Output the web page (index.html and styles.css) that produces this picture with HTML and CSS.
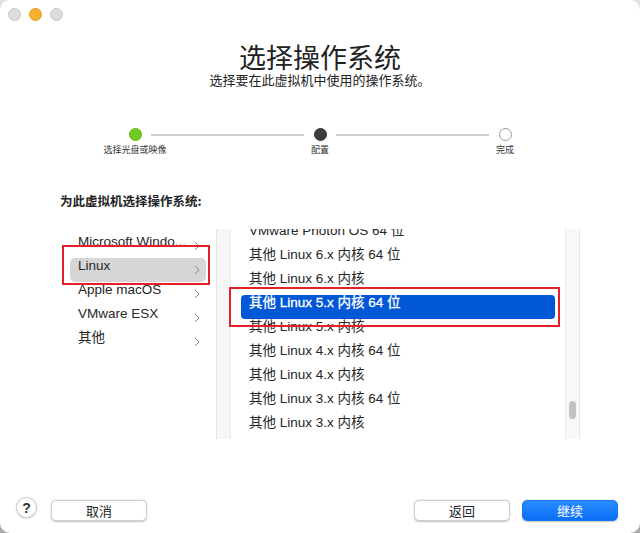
FILE: index.html
```html
<!DOCTYPE html>
<html lang="zh-CN">
<head>
    <meta charset="UTF-8">
    <meta name="viewport" content="width=device-width, initial-scale=1.0">
    <title>选择操作系统</title>
    <link rel="stylesheet" href="styles.css">
</head>
<body>
    <div class="window">
        <div class="titlebar">
            <span class="light"></span>
            <span class="light light-min"></span>
            <span class="light"></span>
        </div>

        <div class="header">
            <h1>选择操作系统</h1>
            <p>选择要在此虚拟机中使用的操作系统。</p>
        </div>

        <div class="steps">
            <div class="step">
                <span class="dot dot-done"></span>
                <span class="step-label">选择光盘或映像</span>
            </div>
            <span class="step-line"></span>
            <div class="step">
                <span class="dot dot-current"></span>
                <span class="step-label">配置</span>
            </div>
            <span class="step-line"></span>
            <div class="step">
                <span class="dot"></span>
                <span class="step-label">完成</span>
            </div>
        </div>

        <h2 class="section-title">为此虚拟机选择操作系统:</h2>

        <div class="browser">
            <ul class="column column-family">
                <li class="row">Microsoft Windo...<svg class="chevron" viewBox="0 0 6 10"><polyline points="1,1 5,5 1,9"/></svg></li>
                <li class="row row-active">Linux<svg class="chevron" viewBox="0 0 6 10"><polyline points="1,1 5,5 1,9"/></svg></li>
                <li class="row">Apple macOS<svg class="chevron" viewBox="0 0 6 10"><polyline points="1,1 5,5 1,9"/></svg></li>
                <li class="row">VMware ESX<svg class="chevron" viewBox="0 0 6 10"><polyline points="1,1 5,5 1,9"/></svg></li>
                <li class="row">其他<svg class="chevron" viewBox="0 0 6 10"><polyline points="1,1 5,5 1,9"/></svg></li>
            </ul>
            <div class="gutter"></div>
            <div class="column column-versions">
                <ul class="version-list">
                    <li class="row">VMware Photon OS 64 位</li>
                    <li class="row">其他 Linux 6.x 内核 64 位</li>
                    <li class="row">其他 Linux 6.x 内核</li>
                    <li class="row row-selected">其他 Linux 5.x 内核 64 位</li>
                    <li class="row">其他 Linux 5.x 内核</li>
                    <li class="row">其他 Linux 4.x 内核 64 位</li>
                    <li class="row">其他 Linux 4.x 内核</li>
                    <li class="row">其他 Linux 3.x 内核 64 位</li>
                    <li class="row">其他 Linux 3.x 内核</li>
                </ul>
            </div>
            <div class="scrollbar">
                <span class="thumb"></span>
            </div>
        </div>

        <div class="footer">
            <button class="help">?</button>
            <button class="btn btn-cancel">取消</button>
            <span class="spacer"></span>
            <button class="btn">返回</button>
            <button class="btn btn-primary">继续</button>
        </div>

        <!-- 标注框 -->
        <div class="mark mark-family"></div>
        <div class="mark mark-version"></div>
    </div>
</body>
</html>
```

FILE: styles.css
```css
body {
    margin: 0;
    padding: 0;
    background: linear-gradient(#e2e2e2, #a9a9a9);
    font-family: "Liberation Sans", "Noto Sans CJK SC", sans-serif;
    color: #262626;
}

.window {
    position: relative;
    width: 640px;
    height: 533px;
    background: white;
    border-radius: 10px;
    overflow: hidden;
    display: flex;
    flex-direction: column;
}

.titlebar {
    height: 28px;
    display: flex;
    align-items: center;
    gap: 8px;
    padding-left: 8px;
}

.light {
    width: 11px;
    height: 11px;
    border-radius: 50%;
    background: #dcdcdc;
    border: 0.5px solid #c6c6c6;
}

.light-min {
    background: #f7b12c;
    border-color: #e09d1e;
}

.header {
    text-align: center;
    margin-top: 13px;
}

h1 {
    margin: 0;
    font-family: "Noto Sans CJK SC", sans-serif;
    font-size: 27px;
    font-weight: normal;
    line-height: 31px;
    color: #222;
}

.header p {
    margin: 0;
    font-family: "Noto Sans CJK SC", sans-serif;
    font-size: 13px;
    line-height: 16px;
    color: #222;
}

.steps {
    display: flex;
    justify-content: center;
    margin-top: 40px;
}

.step {
    width: 13px;
    display: flex;
    flex-direction: column;
    align-items: center;
}

.dot {
    width: 13px;
    height: 13px;
    box-sizing: border-box;
    border-radius: 50%;
    border: 1px solid #9a9a9a;
    background: white;
}

.dot-done {
    background: #6fcc1f;
    border-color: #5fb418;
}

.dot-current {
    background: #3c3c3c;
    border-color: #333;
}

.step-label {
    white-space: nowrap;
    font-family: "Noto Sans CJK SC", sans-serif;
    font-size: 9px;
    line-height: 12px;
    margin-top: 3px;
    color: #333;
}

.step-line {
    width: 153px;
    height: 2px;
    margin: 5.5px 9.5px 0;
    background: #cfcfcf;
}

.section-title {
    margin: 37px 0 0 60px;
    font-family: "Noto Sans CJK SC", sans-serif;
    font-size: 12.5px;
    font-weight: bold;
    line-height: 16px;
    color: #222;
}

.browser {
    display: flex;
    height: 210px;
    margin: 20px 60px 0;
}

ul {
    list-style: none;
    margin: 0;
    padding: 0;
}

.column {
    font-size: 13.5px;
}

.row {
    height: 24px;
    box-sizing: border-box;
    line-height: 16px;
    padding-left: 8px;
    display: flex;
    align-items: flex-start;
    white-space: nowrap;
}

.column-family {
    width: 156px;
    padding: 5px 10px 0;
    box-sizing: border-box;
}

.column-family .row {
    padding-right: 6px;
    border-radius: 5px;
}

.row-active {
    background: #d6d6d6;
}

.chevron {
    width: 6px;
    height: 10px;
    margin-left: auto;
    margin-top: 7px;
    fill: none;
    stroke: #8a8a8a;
    stroke-width: 1;
}

.gutter {
    width: 15px;
    box-sizing: border-box;
    background: #f6f6f6;
    border-left: 1px solid #e6e6e6;
    border-right: 1px solid #ececec;
}

.column-versions {
    width: 334px;
    overflow: hidden;
    padding: 0 10px;
    box-sizing: border-box;
}

.version-list {
    margin-top: -6px;
}

.row-selected {
    background: #0058d6;
    color: white;
    border-radius: 4px;
    -webkit-text-stroke: 0.3px white;
}

.scrollbar {
    width: 15px;
    box-sizing: border-box;
    background: #f8f8f8;
    border-left: 1px solid #e8e8e8;
    border-right: 1px solid #e8e8e8;
    display: flex;
    justify-content: center;
    padding-top: 172px;
}

.thumb {
    width: 7px;
    height: 18px;
    border-radius: 4px;
    background: #c2c2c2;
}

.footer {
    margin-top: auto;
    display: flex;
    align-items: center;
    padding: 0 22px 12px 16px;
}

button {
    font-family: "Noto Sans CJK SC", sans-serif;
    cursor: pointer;
}

.help {
    width: 21px;
    height: 21px;
    border-radius: 50%;
    border: 0.5px solid #cfcfcf;
    background: white;
    box-shadow: 0 0.5px 1.5px rgba(0, 0, 0, 0.25);
    font-family: "Liberation Sans", sans-serif;
    font-size: 14px;
    font-weight: bold;
    color: #333;
    padding: 0;
    margin-top: -6px;
}

.btn {
    width: 96px;
    height: 21px;
    padding: 0;
    border-radius: 5px;
    border: 0.5px solid #d0d0d0;
    background: white;
    box-shadow: 0 0.5px 1.5px rgba(0, 0, 0, 0.25);
    font-size: 13px;
    line-height: 19px;
    color: #262626;
}

.btn-cancel {
    margin-left: 14px;
}

.btn + .btn {
    margin-left: 12px;
}

.btn-primary {
    background: linear-gradient(#2a8cff, #0a6ef6);
    border-color: #1577f5;
    color: white;
}

.spacer {
    flex: 1;
}

.mark {
    position: absolute;
    border: 2px solid #e5202b;
    box-sizing: border-box;
}

.mark-family {
    left: 62px;
    top: 245px;
    width: 148px;
    height: 40px;
}

.mark-version {
    left: 229px;
    top: 287px;
    width: 331px;
    height: 40px;
}
```
